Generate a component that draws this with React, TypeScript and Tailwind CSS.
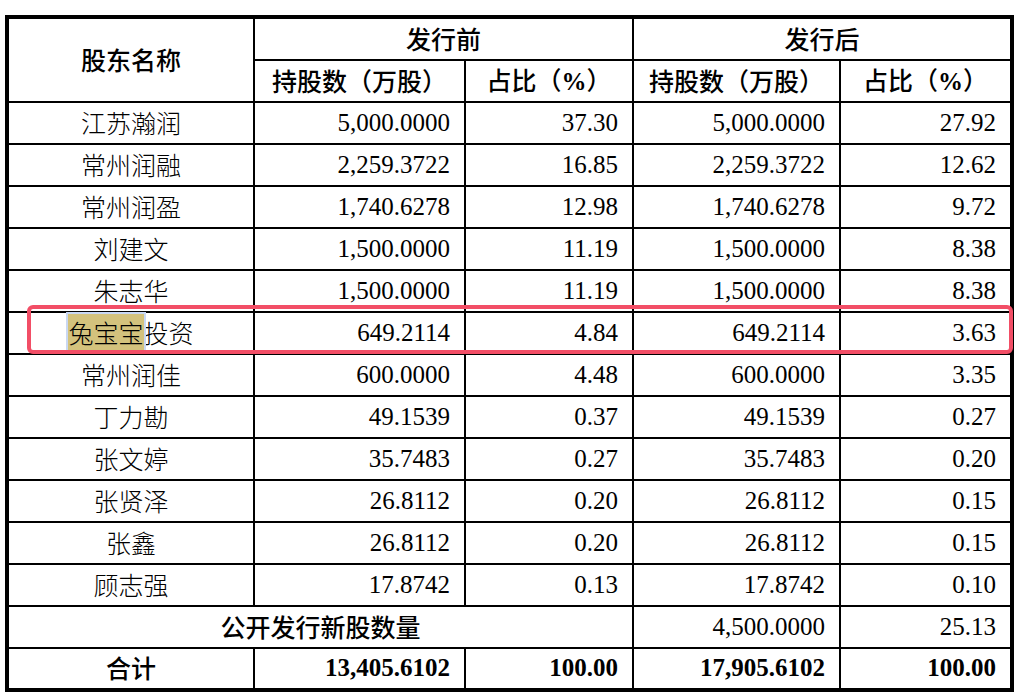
import React from "react";

const rows = [
  ["江苏瀚润", "5,000.0000", "37.30", "5,000.0000", "27.92"],
  ["常州润融", "2,259.3722", "16.85", "2,259.3722", "12.62"],
  ["常州润盈", "1,740.6278", "12.98", "1,740.6278", "9.72"],
  ["刘建文", "1,500.0000", "11.19", "1,500.0000", "8.38"],
  ["朱志华", "1,500.0000", "11.19", "1,500.0000", "8.38"],
  ["兔宝宝投资", "649.2114", "4.84", "649.2114", "3.63"],
  ["常州润佳", "600.0000", "4.48", "600.0000", "3.35"],
  ["丁力勘", "49.1539", "0.37", "49.1539", "0.27"],
  ["张文婷", "35.7483", "0.27", "35.7483", "0.20"],
  ["张贤泽", "26.8112", "0.20", "26.8112", "0.15"],
  ["张鑫", "26.8112", "0.20", "26.8112", "0.15"],
  ["顾志强", "17.8742", "0.13", "17.8742", "0.10"],
];

const cjk = "font-['Noto_Sans_CJK_SC',sans-serif]";
const num = "font-['Liberation_Serif','Times_New_Roman',serif]";
const cell = "border-2 border-black p-0";
const head = `${cell} ${cjk} text-[25px] font-medium`;
const numCell = `${cell} ${num} text-right pr-[14px] text-[25px]`;

const App = () => {
  return (
    <div className="bg-white w-[1017px] h-[697px] relative pt-[15px] pl-[5px]">
      <table className="table-fixed border-collapse border-[4px] border-black w-[1007px] text-black">
        <colgroup>
          <col className="w-[247px]" />
          <col className="w-[211px]" />
          <col className="w-[168px]" />
          <col className="w-[207px]" />
          <col className="w-[172px]" />
        </colgroup>
        <thead>
          <tr className="h-[43px]">
            <th rowSpan={2} className={head}>
              股东名称
            </th>
            <th colSpan={2} className={head}>
              发行前
            </th>
            <th colSpan={2} className={head}>
              发行后
            </th>
          </tr>
          <tr className="h-[41px]">
            <th className={head}>持股数（万股）</th>
            <th className={head}>
              占比（<span className={`${num} font-bold`}>%</span>）
            </th>
            <th className={head}>持股数（万股）</th>
            <th className={head}>
              占比（<span className={`${num} font-bold`}>%</span>）
            </th>
          </tr>
        </thead>
        <tbody>
          {rows.map((r) => (
            <tr key={r[0]} className="h-[42px]">
              <td className={`${cell} ${cjk} text-[25px] font-light text-center`}>
                {r[0] === "兔宝宝投资" ? (
                  <>
                    <span className="bg-[#d3c27d] outline outline-2 outline-[#c9d8f3]">兔宝宝</span>
                    投资
                  </>
                ) : (
                  r[0]
                )}
              </td>
              <td className={numCell}>{r[1]}</td>
              <td className={numCell}>{r[2]}</td>
              <td className={numCell}>{r[3]}</td>
              <td className={numCell}>{r[4]}</td>
            </tr>
          ))}
          <tr className="h-[42px]">
            <td colSpan={3} className={`${head} text-center`}>
              公开发行新股数量
            </td>
            <td className={numCell}>4,500.0000</td>
            <td className={numCell}>25.13</td>
          </tr>
          <tr className="h-[42px]">
            <td className={`${head} text-center`}>合计</td>
            <td className={`${numCell} font-bold`}>13,405.6102</td>
            <td className={`${numCell} font-bold`}>100.00</td>
            <td className={`${numCell} font-bold`}>17,905.6102</td>
            <td className={`${numCell} font-bold`}>100.00</td>
          </tr>
        </tbody>
      </table>
      <div className="absolute left-[27px] top-[305px] w-[986px] h-[49px] border-[4px] border-[#f24e66] rounded-[6px] pointer-events-none" />
    </div>
  );
};

export default App;
